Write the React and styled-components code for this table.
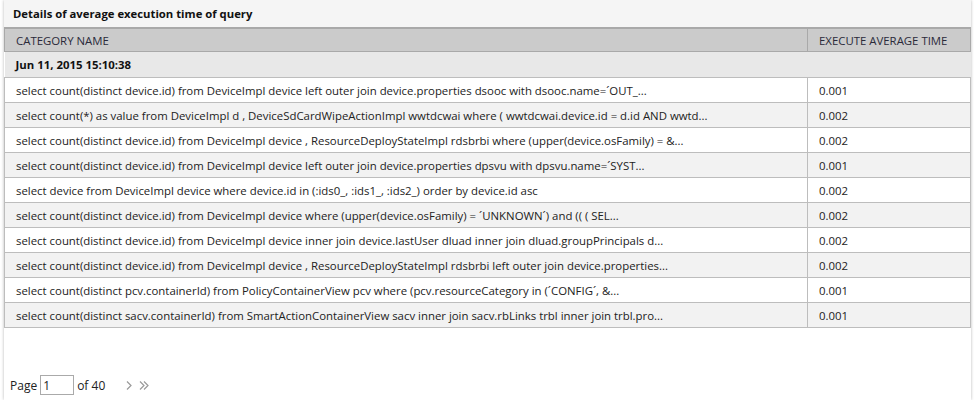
import styled, { createGlobalStyle } from "styled-components";

const rows = [
  ["select count(distinct device.id) from DeviceImpl device left outer join device.properties dsooc with dsooc.name=´OUT_...", "0.001"],
  ["select count(*) as value from DeviceImpl d , DeviceSdCardWipeActionImpl wwtdcwai where ( wwtdcwai.device.id = d.id AND wwtd...", "0.002"],
  ["select count(distinct device.id) from DeviceImpl device , ResourceDeployStateImpl rdsbrbi where (upper(device.osFamily) = &...", "0.002"],
  ["select count(distinct device.id) from DeviceImpl device left outer join device.properties dpsvu with dpsvu.name=´SYST...", "0.001"],
  ["select device from DeviceImpl device where device.id in (:ids0_, :ids1_, :ids2_) order by device.id asc", "0.002"],
  ["select count(distinct device.id) from DeviceImpl device where (upper(device.osFamily) = ´UNKNOWN´) and (( ( SEL...", "0.002"],
  ["select count(distinct device.id) from DeviceImpl device inner join device.lastUser dluad inner join dluad.groupPrincipals d...", "0.002"],
  ["select count(distinct device.id) from DeviceImpl device , ResourceDeployStateImpl rdsbrbi left outer join device.properties...", "0.002"],
  ["select count(distinct pcv.containerId) from PolicyContainerView pcv where (pcv.resourceCategory in (´CONFIG´, &...", "0.001"],
  ["select count(distinct sacv.containerId) from SmartActionContainerView sacv inner join sacv.rbLinks trbl inner join trbl.pro...", "0.001"],
];

const App = () => {
  return (
    <>
      <Global />
      <Panel>
        <Title>Details of average execution time of query</Title>
        <Table>
          <colgroup>
            <col />
            <col style={{ width: "163px" }} />
          </colgroup>
          <thead>
            <tr>
              <Th>CATEGORY NAME</Th>
              <Th>EXECUTE AVERAGE TIME</Th>
            </tr>
          </thead>
          <tbody>
            <GroupRow>
              <td colSpan={2}>Jun 11, 2015 15:10:38</td>
            </GroupRow>
            {rows.map((r, i) => (
              <Row key={i} odd={i % 2 === 1}>
                <td>{r[0]}</td>
                <td>{r[1]}</td>
              </Row>
            ))}
          </tbody>
        </Table>
        <Pager>
          <span>Page</span>
          <PageInput defaultValue="1" />
          <span>of 40</span>
          <Nav>
            <Arrow $w={10} viewBox="0 0 10 12">
              <path d="M3 2 L7 6 L3 10" />
            </Arrow>
            <Arrow $w={14} viewBox="0 0 14 12">
              <path d="M3 2 L7 6 L3 10 M7 2 L11 6 L7 10" />
            </Arrow>
          </Nav>
        </Pager>
      </Panel>
    </>
  );
};
export default App;

const Global = createGlobalStyle`
  body {
    margin: 0;
    background: #fff;
    font-family: "Open Sans", "DejaVu Sans", sans-serif;
    color: #222;
  }
`;

const Panel = styled.div`
  margin-left: 4px;
  width: 967px;
  height: 400px;
  display: flex;
  flex-direction: column;
  background: #fff;
  box-shadow: 0 0 3px rgba(0, 0, 0, 0.28);
  font-size: 11.4px;
`;

const Title = styled.div`
  height: 27px;
  line-height: 27px;
  padding-left: 9px;
  background: #f5f5f5;
  font-weight: bold;
  font-size: 11.3px;
  color: #111;
`;

const Table = styled.table`
  width: 100%;
  border-collapse: collapse;
  table-layout: fixed;
  td {
    padding: 0 0 0 11px;
    white-space: nowrap;
    overflow: hidden;
  }
`;

const Th = styled.th`
  height: 22px;
  background: #cbcbcb;
  border: 1px solid #a9a9a9;
  border-top-width: 2px;
  text-align: left;
  font-weight: normal;
  padding: 0 0 0 11px;
  color: #2a2a3a;
`;

const GroupRow = styled.tr`
  td {
    height: 25px;
    background: #e8e8e8;
    font-weight: bold;
    color: #111;
  }
`;

const Row = styled.tr`
  td {
    height: 24px;
    background: ${({ odd }) => (odd ? "#f2f2f2" : "#fff")};
    border: 1px solid #bdbdbd;
  }
`;

const Pager = styled.div`
  margin-top: auto;
  height: 30px;
  display: flex;
  align-items: center;
  padding-left: 6px;
  font-size: 12px;
  gap: 3px;
`;

const PageInput = styled.input`
  width: 28px;
  height: 18px;
  border: 1px solid #aaa;
  padding: 0 2px;
  font: inherit;
  color: #222;
  margin: 0;
`;

const Nav = styled.div`
  display: flex;
  align-items: center;
  margin-left: 16px;
  gap: 3px;
`;

const Arrow = styled.svg`
  height: 13px;
  width: ${({ $w }) => $w}px;
  fill: none;
  stroke: #9a9a9a;
  stroke-width: 1.2;
`;
